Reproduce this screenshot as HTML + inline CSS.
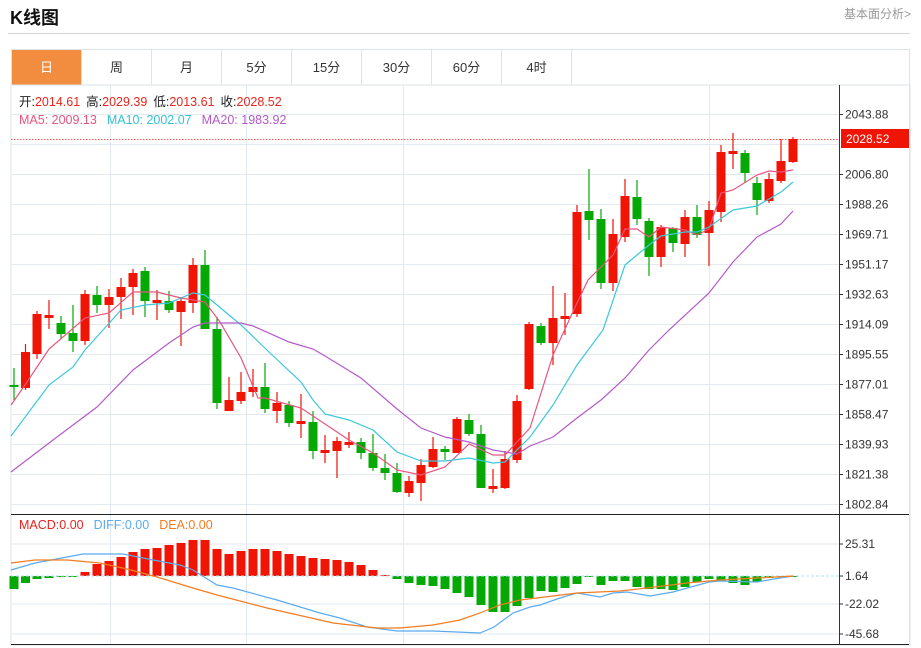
<!DOCTYPE html>
<html><head><meta charset="utf-8"><style>
*{margin:0;padding:0;box-sizing:border-box}
body{width:921px;height:648px;background:#fff;font-family:"Liberation Sans","Noto Sans CJK SC",sans-serif;position:relative;overflow:hidden}
.t{position:absolute;left:10px;top:4px;font-size:18px;font-weight:bold;color:#111}
.r{position:absolute;right:10px;top:5px;font-size:12px;color:#999}
.hr{position:absolute;left:8px;top:33px;width:902px;height:1px;background:#d4d4d4}
.tabs{position:absolute;left:11px;top:49px;width:899px;height:36px;border:1px solid #dde3e8;border-bottom:none;display:flex}
.tabs div{width:70px;height:35px;line-height:35px;text-align:center;font-size:13px;color:#333;border-right:1px solid #dde3e8}
.tabs div.a{background:#f28c3e;color:#fff}
svg{position:absolute;left:0;top:0}
</style></head><body>
<div class="t">K线图</div>
<div class="r">基本面分析&gt;</div>
<div class="hr"></div>
<div class="tabs"><div class="a">日</div><div>周</div><div>月</div><div>5分</div><div>15分</div><div>30分</div><div>60分</div><div>4时</div></div>
<svg width="921" height="648" viewBox="0 0 921 648" font-family="Liberation Sans, Noto Sans CJK SC, sans-serif">
<rect x="11" y="85" width="899" height="560" fill="none" stroke="#dde3e8"/>
<g stroke="#e2eaf0" stroke-width="1">
<path d="M11 114.5H839M11 144.5H839M11 174.5H839M11 204.5H839M11 234.5H839M11 264.5H839M11 294.5H839M11 324.5H839M11 354.5H839M11 384.5H839M11 414.5H839M11 444.5H839M11 474.5H839M11 504.5H839"/>
<path d="M11 544H839M11 604H839M11 634H839"/>
<path d="M110.5 85V645M246.5 85V645M403.5 85V645M709.5 85V645"/>
</g>
<line x1="11" y1="514.5" x2="910" y2="514.5" stroke="#222"/>
<line x1="11" y1="644.5" x2="910" y2="644.5" stroke="#222"/>
<line x1="839.5" y1="85" x2="839.5" y2="645" stroke="#333"/>
<line x1="909.5" y1="85" x2="909.5" y2="645" stroke="#dde3e8"/>
<g stroke="#333"><path d="M839 114.5h4M839 174.5h4M839 204.5h4M839 234.5h4M839 264.5h4M839 294.5h4M839 324.5h4M839 354.5h4M839 384.5h4M839 414.5h4M839 444.5h4M839 474.5h4M839 504.5h4M839 544h4M839 576h4M839 604h4M839 634h4"/></g>
<g font-size="12" fill="#333">
<text x="845" y="118.5">2043.88</text><text x="845" y="178.5">2006.80</text><text x="845" y="208.5">1988.26</text><text x="845" y="238.5">1969.71</text><text x="845" y="268.5">1951.17</text><text x="845" y="298.5">1932.63</text><text x="845" y="328.5">1914.09</text><text x="845" y="358.5">1895.55</text><text x="845" y="388.5">1877.01</text><text x="845" y="418.5">1858.47</text><text x="845" y="448.5">1839.93</text><text x="845" y="478.5">1821.38</text><text x="845" y="508.5">1802.84</text>
<text x="845" y="548">25.31</text><text x="845" y="580">1.64</text><text x="845" y="608">-22.02</text><text x="845" y="638">-45.68</text>
</g>
<line x1="11" y1="139.5" x2="839" y2="139.5" stroke="#f55" stroke-dasharray="1.5,1.5" stroke-width="1"/>
<rect x="841" y="129" width="68" height="19" fill="#f01405"/>
<text x="846" y="143" font-size="12" fill="#fff">2028.52</text>
<g font-size="12.5">
<text x="19" y="106"><tspan fill="#222">开:</tspan><tspan fill="#e8251e">2014.61</tspan><tspan fill="#222" dx="6">高:</tspan><tspan fill="#e8251e">2029.39</tspan><tspan fill="#222" dx="6">低:</tspan><tspan fill="#e8251e">2013.61</tspan><tspan fill="#222" dx="6">收:</tspan><tspan fill="#e8251e">2028.52</tspan></text>
<text x="19" y="124"><tspan fill="#e8557e">MA5: 2009.13</tspan><tspan fill="#32c3d8" dx="10">MA10: 2002.07</tspan><tspan fill="#b45bc8" dx="10">MA20: 1983.92</tspan></text>
<text x="19" y="529"><tspan fill="#e8251e">MACD:0.00</tspan><tspan fill="#5aabf0" dx="10">DIFF:0.00</tspan><tspan fill="#f47c20" dx="10">DEA:0.00</tspan></text>
</g>
<g id="c"></g>
<g id="m"></g>
<polyline fill="none" stroke="#e8557e" stroke-width="1.2" points="11,405 25,385 49,349 85,318 109,313 133,292 157,292 181,298 205,302 220,322 241,358 258,398 265,398 301,408 337,432 349,440 373,453 397,470 421,475 445,467 469,444 493,455 505,455 530,428 553,355 577,303 588,280 601,267 613,255 625,229 637,229 649,237 661,227 685,230 697,235 709,229 721,193 733,190 757,175 769,171 781,172 793,170"/>
<polyline fill="none" stroke="#3cc8db" stroke-width="1.2" points="11,436 49,385 73,367 85,350 121,310 145,305 169,303 193,293 205,295 241,325 270,353 301,382 313,400 325,414 349,420 373,430 397,452 421,461 445,461 469,458 493,463 505,462 530,437 553,405 577,365 603,330 625,265 649,245 661,236 685,232 697,232 709,227 733,210 757,206 781,192 793,182"/>
<polyline fill="none" stroke="#b45bc8" stroke-width="1.2" points="11,472 53,440 97,407 133,370 169,343 193,327 205,323 241,323 253,326 289,342 313,349 325,356 361,378 397,409 421,428 445,437 469,442 493,450 517,454 530,446 553,437 577,418 601,400 625,378 649,350 669,330 709,293 733,262 757,237 781,224 793,211"/>
<line x1="11" y1="576" x2="839" y2="576" stroke="#b7dff0" stroke-dasharray="3,2"/>
<polyline fill="none" stroke="#5aabf0" stroke-width="1.2" points="11,570 35,563 83,554 123,554 153,560 180,565 193,570 217,585 233,588 277,600 320,613 340,618 367,627 397,631 433,631 480,633 494,627 513,613 530,607 540,605 560,598 577,593 600,597 613,593 627,592 650,596 673,592 709,582 720,581 757,582 780,578 793,576"/>
<polyline fill="none" stroke="#f47c20" stroke-width="1.2" points="11,563 35,560 67,560 100,563 127,569 157,577 193,588 217,595 267,608 320,620 333,623 377,628 400,628 433,625 460,620 480,613 500,605 520,600 553,596 577,593 620,591 647,588 687,583 720,580 757,578 793,576"/>
</svg>
<script>
var C=[[14,368,400,385,387,'g'],[25.5,344,390,352,388,'r'],[37,311,359,314,354,'r'],[49,300,329,315,318,'r'],[61,316,339,323,334,'g'],[73,305,352,333,341,'g'],[85,290,345,294,341,'r'],[97,286,313,295,305,'g'],[109,289,328,297,305,'r'],[121,278,319,287,297,'r'],[133,269,315,273,287,'r'],[145,267,317,271,301,'g'],[157,290,320,300,303,'r'],[169,291,313,301,310,'g'],[181,297,346,301,312,'r'],[193,258,313,265,303,'r'],[205,250,329,265,329,'g'],[217,317,409,329,403,'g'],[229,377,411,400,411,'r'],[241,372,404,392,401,'r'],[253,369,397,387,392,'r'],[265,363,413,387,409,'g'],[277,392,423,403,411,'r'],[289,401,427,405,423,'g'],[301,394,438,421,424,'r'],[313,411,459,422,451,'g'],[325,435,463,450,453,'r'],[337,437,478,441,451,'r'],[349,432,448,442,445,'r'],[361,438,459,442,453,'g'],[373,434,471,453,468,'g'],[385,454,480,468,473,'g'],[397,463,493,473,492,'g'],[409,476,497,481,493,'r'],[421,459,501,465,483,'r'],[433,437,468,449,467,'r'],[445,446,460,449,452,'g'],[457,417,453,419,453,'r'],[469,414,436,420,434,'g'],[481,425,488,434,488,'g'],[493,469,493,486,489,'r'],[505,451,489,459,488,'r'],[517,395,463,401,460,'r'],[529,322,390,324,389,'r'],[541,323,345,326,343,'g'],[553,286,365,318,343,'r'],[565,293,335,316,319,'r'],[577,205,317,212,314,'r'],[589,169,240,211,220,'g'],[601,209,289,219,283,'g'],[613,219,291,234,283,'r'],[625,179,242,196,237,'r'],[637,180,225,197,219,'g'],[649,218,276,221,257,'g'],[661,225,267,227,257,'r'],[673,227,252,228,243,'g'],[685,210,257,217,244,'r'],[697,205,238,217,235,'g'],[709,201,266,210,233,'r'],[721,145,222,152,212,'r'],[733,133,169,151,154,'r'],[745,150,183,153,173,'g'],[757,177,215,183,200,'g'],[769,173,203,179,201,'r'],[781,139,183,161,181,'r'],[793,137,163,139,162,'r']];
var M=[589,583,579,578,577,577,572,564,561,557,552,549,548,545,543,540,540,549,554,551,549,549,551,554,556,558,559,560,562,565,570,575,579,583,585,586,589,593,597,605,612,612,606,598,591,592,588,584,577,585,581,581,587,589,589,590,587,582,579,581,583,585,582,578,577,577];
var ns='http://www.w3.org/2000/svg',g=document.getElementById('c'),m=document.getElementById('m');
function el(p,t,a){var e=document.createElementNS(ns,t);for(var k in a)e.setAttribute(k,a[k]);p.appendChild(e);}
C.forEach(function(c,i){var col=c[5]=='r'?'#f01405':'#05a805';
el(g,'line',{x1:c[0],x2:c[0],y1:c[1],y2:c[2],stroke:col,'stroke-width':1.2});
el(g,'rect',{x:c[0]-4.5,y:c[3],width:9,height:Math.max(2,c[4]-c[3]),fill:col});
var v=M[i],col2=v<576?'#f01405':'#05a805';
el(m,'rect',{x:c[0]-4.5,y:Math.min(v,576),width:9,height:Math.max(1,Math.abs(v-576)),fill:col2});});
</script>
</body></html>
